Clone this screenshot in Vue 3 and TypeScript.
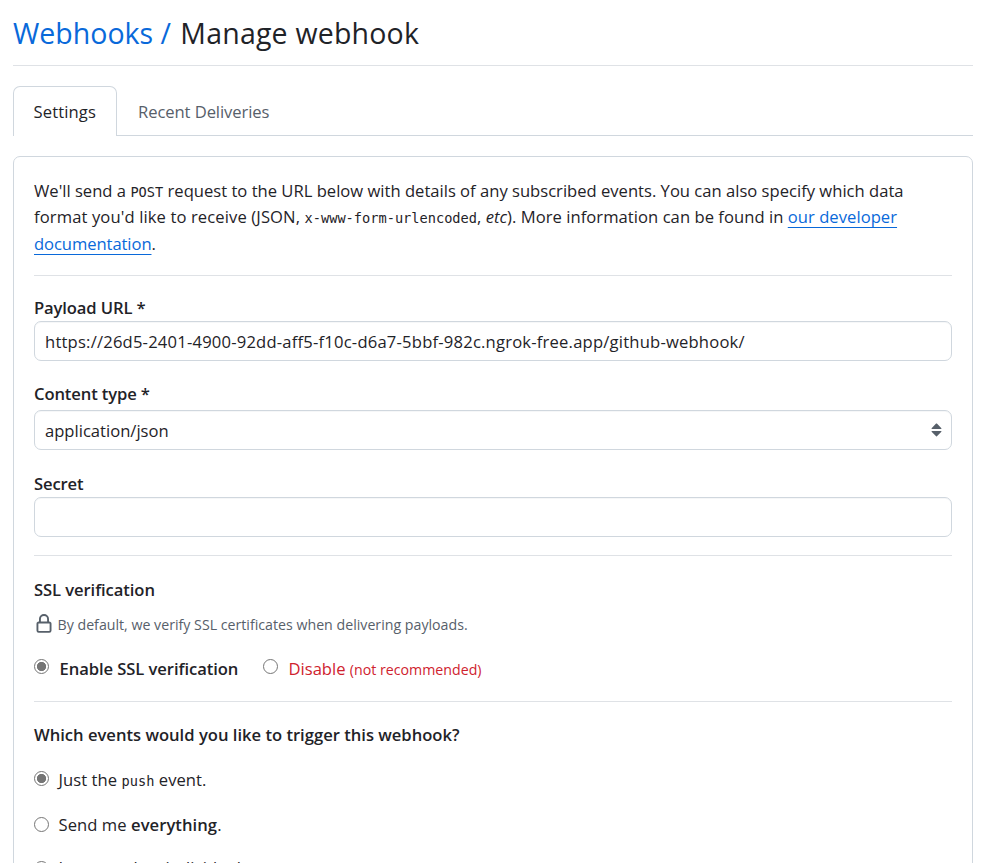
<script setup lang="ts">
import { ref } from 'vue'

const payloadUrl = ref('https://26d5-2401-4900-92dd-aff5-f10c-d6a7-5bbf-982c.ngrok-free.app/github-webhook/')
const contentType = ref('application/json')
const secret = ref('')
const ssl = ref('enable')
const events = ref('push')
</script>

<template>
  <main class="page">
    <h1 class="title"><a class="crumb">Webhooks /</a> <span class="current">Manage webhook</span></h1>

    <nav class="tabs">
      <a class="tab active">Settings</a>
      <a class="tab deliveries">Recent Deliveries</a>
    </nav>

    <section class="panel">
      <div class="intro">
        <div class="l1">We'll send a <code>POST</code> request to the URL below with details of any subscribed events. You can also specify which data</div>
        <div class="l2"><span class="format">format you'd like to receive (JSON, </span><code>x-www-form-urlencoded</code>, <em>etc</em>). More information can be found in <a class="link">our developer</a></div>
        <div class="l3"><a class="link">documentation</a>.</div>
      </div>
      <hr class="rule" />

      <label class="label url" for="url">Payload URL *</label>
      <input id="url" v-model="payloadUrl" class="control address" type="text" />

      <label class="label type" for="type">Content type *</label>
      <div class="select-wrap">
        <select id="type" v-model="contentType" class="control select">
          <option>application/json</option>
          <option>application/x-www-form-urlencoded</option>
        </select>
        <svg class="arrows" width="11" height="14" viewBox="0 0 11 14" fill="#57606a">
          <path d="M5.1 .6a.6.6 0 0 1 .8 0l4.5 4.7q.3.7-.4.7H1q-.7 0-.4-.7zM5.1 13.2a.6.6 0 0 0 .8 0l4.5-4.5Q10.700 8 10 8H1q-.7 0-.4.7z" />
        </svg>
      </div>

      <label class="label secret" for="secret">Secret</label>
      <input id="secret" v-model="secret" class="control" type="text" />
      <hr class="rule after-secret" />

      <h4 class="heading ssl">SSL verification</h4>
      <p class="note">
        <svg class="lock" width="20" height="20" viewBox="0 0 16 16" fill="#57606a">
          <path d="M4 4a4 4 0 0 1 8 0v2h.25c.966 0 1.750.784 1.750 1.750v5.500A1.750 1.750 0 0 1 12.250 15h-8.500A1.750 1.750 0 0 1 2 13.250v-5.500C2 6.784 2.784 6 3.750 6H4Zm8.250 3.500h-8.500a.25.25 0 0 0-.25.25v5.500c0 .138.112.25.25.25h8.500a.25.25 0 0 0 .25-.25v-5.500a.25.25 0 0 0-.25-.25ZM10.500 6V4a2.500 2.500 0 1 0-5 0v2Z" />
        </svg>
        <span>By default, we verify SSL certificates when delivering payloads.</span>
      </p>
      <div class="ssl-options">
        <label class="option strong"><input v-model="ssl" class="radio" type="radio" value="enable" /><span>Enable SSL verification</span></label>
        <label class="option danger"><input v-model="ssl" class="radio" type="radio" value="disable" /><span>Disable <small>(not recommended)</small></span></label>
      </div>
      <hr class="rule after-ssl" />

      <h4 class="heading events">Which events would you like to trigger this webhook?</h4>
      <div class="event-options">
        <label class="option"><input v-model="events" class="radio" type="radio" value="push" /><span>Just the <code>push</code> event.</span></label>
        <label class="option everything"><input v-model="events" class="radio" type="radio" value="all" /><span>Send me <b>everything</b>.</span></label>
        <label class="option individual"><input v-model="events" class="radio" type="radio" value="some" /><span>Let me select individual events.</span></label>
      </div>
    </section>
  </main>
</template>

<style>
html,
body {
  height: 863px;
  overflow: hidden;
  background: #fff;
}
</style>

<style scoped>
* {
  box-sizing: border-box;
}
.page {
  width: 960px;
  height: 863px;
  margin-left: 13px;
  overflow: hidden;
  color: #1f2328;
  font: 16.6px/26.25px 'Open Sans', 'Noto Sans', sans-serif;
}
.title {
  height: 66px;
  margin: 0;
  padding-top: 11px;
  border-bottom: 1px solid #dfe2e6;
  font-size: 28.5px;
  font-weight: 400;
  line-height: 45px;
  white-space: nowrap;
}
.current {
  margin-left: 2px;
  letter-spacing: 0.2px;
}
.crumb,
.link {
  color: #0969da;
}
.tabs {
  display: flex;
  height: 50px;
  margin-top: 20px;
  border-bottom: 1px solid #d0d7de;
}
.tab {
  height: 50px;
  padding: 13px 0 0 21px;
  color: #57606a;
  letter-spacing: -0.08px;
  white-space: nowrap;
}
.tab.active {
  width: 104px;
  padding: 12px 0 0 19.5px;
  border: 1px solid #d0d7de;
  border-bottom: 0;
  border-radius: 7px 7px 0 0;
  background: #fff;
  color: #1f2328;
  letter-spacing: 0.12px;
}
.panel {
  height: 760px;
  margin-top: 20px;
  padding: 20px;
  border: 1px solid #d0d7de;
  border-radius: 7px;
}
.intro {
  height: 98px;
  padding-top: 0.8px;
  white-space: nowrap;
}
.l2 {
  letter-spacing: 0.04px;
}
.format {
  letter-spacing: 0.11px;
}
.l3 {
  padding-top: 0.7px;
  letter-spacing: -0.08px;
}
code {
  font: 13.65px/1 'DejaVu Sans Mono', monospace;
  letter-spacing: 0;
}
.link {
  text-decoration: underline;
  text-decoration-thickness: 1px;
  text-underline-offset: 4px;
}
.rule {
  height: 1px;
  margin: 0;
  border: 0;
  background: #dfe2e6;
}
.label {
  display: block;
  height: 26px;
  margin-top: 19px;
  font-weight: 600;
  line-height: 26px;
  letter-spacing: -0.12px;
}
.label.type {
  height: 29px;
  margin-top: 20px;
}
.label.secret {
  margin-top: 21px;
}
.control {
  display: block;
  width: 918px;
  height: 40px;
  margin: 0;
  padding: 0 10px;
  border: 1px solid #d0d7de;
  border-radius: 7px;
  outline: 0;
  background: #fff;
  box-shadow: inset 0 1px 0 rgba(208, 215, 222, 0.2);
  color: #1f2328;
  font: inherit;
}
.address {
  letter-spacing: 0.2px;
}
.select-wrap {
  position: relative;
}
.select {
  padding-top: 2px;
  appearance: none;
}
.arrows {
  position: absolute;
  top: 13px;
  right: 10px;
}
.after-secret {
  margin-top: 18px;
}
.heading {
  height: 26px;
  margin: 21px 0 0;
  font-size: inherit;
  font-weight: 600;
  line-height: 26px;
  white-space: nowrap;
}
.heading.ssl {
  letter-spacing: -0.08px;
}
.note {
  display: flex;
  height: 26px;
  margin: 9px 0 0;
  color: #57606a;
  font-size: 14.2px;
}
.lock {
  margin-top: 2px;
}
.note span {
  margin-left: 3.5px;
}
.ssl-options {
  display: flex;
  height: 26px;
  margin-top: 18px;
}
.option {
  display: flex;
  height: 26px;
  white-space: nowrap;
}
.radio {
  appearance: none;
  flex: none;
  width: 15px;
  height: 15px;
  margin: 3px 9px 0 0;
  border: 1px solid #767676;
  border-radius: 50%;
  background: #fff;
}
.radio:checked {
  background: radial-gradient(circle, #767676 4.3px, #fff 5px);
}
.strong {
  width: 229px;
  font-weight: 600;
  letter-spacing: -0.07px;
}
.ssl-options .radio {
  margin-right: 10.5px;
}
.danger {
  color: #cf222e;
}
.danger small {
  font-size: 14.2px;
}
.after-ssl {
  margin-top: 19px;
}
.heading.events {
  margin-top: 20px;
}
.event-options {
  display: grid;
  gap: 19px;
  margin-top: 19px;
}
.event-options .option {
  letter-spacing: 0.06px;
}
.event-options .radio {
  margin: 4px 9.5px 0 0;
}
.event-options .everything .radio {
  margin-top: 5px;
}
.event-options .individual {
  margin-top: -2px;
}
.event-options .individual .radio {
  margin-top: 6px;
}
b {
  font-weight: 600;
}
</style>
